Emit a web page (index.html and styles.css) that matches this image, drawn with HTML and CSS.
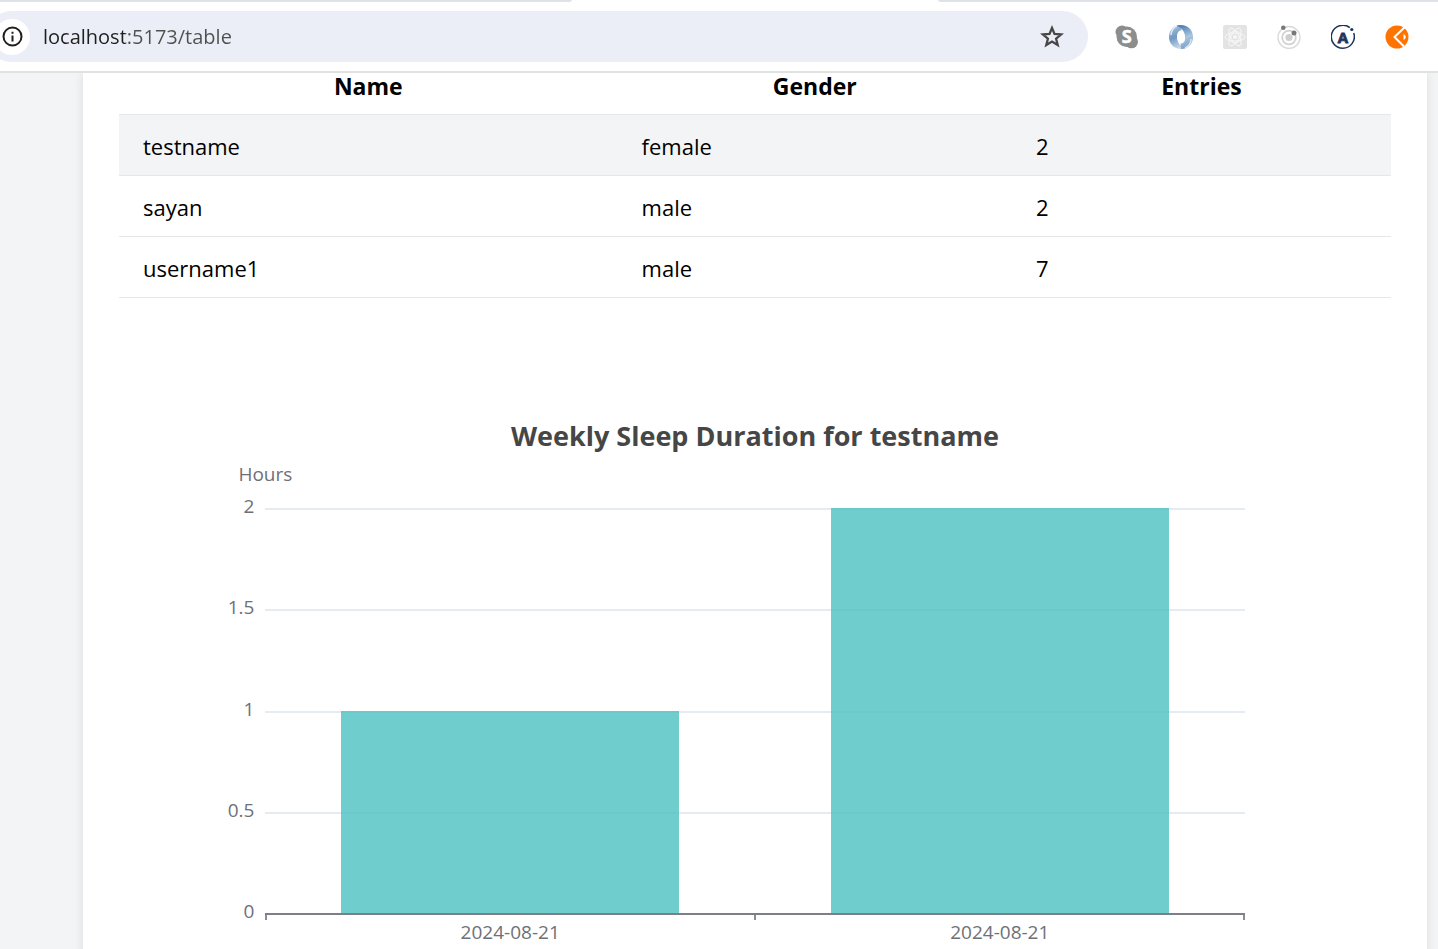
FILE: index.html
```html
<!DOCTYPE html>
<html lang="en">
<head>
<meta charset="utf-8">
<meta name="viewport" content="width=device-width, initial-scale=1">
<title>Sleep entries</title>
<link rel="stylesheet" href="styles.css">
</head>
<body>
<header class="browser">
  <div class="tabs"><span class="tab-strip tab-strip-left"></span><span class="tab-active"></span><span class="tab-strip tab-strip-right"></span></div>
  <div class="toolbar">
    <div class="address">
      <button class="site-info" type="button" aria-label="Site information">
        <svg viewBox="0 0 24 24" width="24" height="24" fill="none" stroke="#1f1f1f" stroke-width="2"><circle cx="12.500" cy="11.500" r="9"/><path d="M12.500 10.500v6M12.500 6.700v2"/></svg>
      </button>
      <input class="url" type="text" aria-label="Address" value="localhost:5173/table" spellcheck="false">
      <button class="icon-button" type="button" aria-label="Bookmark">
        <svg viewBox="0 0 24 24" width="24" height="24" fill="none" stroke="#474747" stroke-width="2.300"><path d="M12 3l2.500 5.900 6.700.5-5.100 4.300 1.600 6.300-5.700-3.500L6.300 20l1.600-6.300-5.100-4.300 6.700-.5z"/></svg>
      </button>
    </div>
    <div class="extensions">
      <button class="icon-button" type="button" aria-label="Skype">
        <svg viewBox="0 0 24 24" width="24" height="24" fill="#8d8d8d"><circle cx="7" cy="7" r="6.500"/><circle cx="16.500" cy="16.800" r="6.500"/><circle cx="11.700" cy="11.700" r="10.200"/><text class="glyph" x="11.700" y="18.200" font-size="18" fill="#fff" stroke="#fff" stroke-width=".6" text-anchor="middle">S</text></svg>
      </button>
      <button class="icon-button" type="button" aria-label="JSON viewer">
        <svg viewBox="0 0 24 24" width="24" height="24">
          <defs>
            <linearGradient id="ring-a" x1=".2" y1="0" x2=".5" y2="1"><stop offset="0" stop-color="#a9c5e0"/><stop offset=".5" stop-color="#7199c3"/><stop offset="1" stop-color="#c9dced"/></linearGradient>
            <linearGradient id="ring-b" x1=".5" y1="0" x2=".8" y2="1"><stop offset="0" stop-color="#5681b0"/><stop offset=".5" stop-color="#aac6e0"/><stop offset="1" stop-color="#6f98c2"/></linearGradient>
          </defs>
          <path d="M12 0C5 0 0 5.300 0 12s5 12 12 12c2 0 4-.5 5-1-5-1-9-5-9-11 0-4 2-6.500 4.500-6.500z" fill="url(#ring-a)"/>
          <path d="M12 24c7 0 12-5.300 12-12S19 0 12 0C10 0 8 .5 7 1c5 1 9 5 9 11 0 4-2 6.500-4.500 6.500z" fill="url(#ring-b)"/>
          <path d="M8 1C4 3 2 6 2 10M16 23c4-2 6-5 6-9" fill="none" stroke="#dce8f3" stroke-width="1.500"/>
          <ellipse cx="12.200" cy="12" rx="3.700" ry="6.300" fill="#fff" transform="rotate(-12 12 12)"/>
        </svg>
      </button>
      <button class="icon-button" type="button" aria-label="React developer tools">
        <svg viewBox="0 0 24 24" width="24" height="24"><rect width="24" height="24" rx="2" fill="#e3e3e3"/><g fill="none" stroke="#fafafa" stroke-width=".8"><ellipse cx="12" cy="12" rx="10" ry="4"/><ellipse cx="12" cy="12" rx="10" ry="4" transform="rotate(60 12 12)"/><ellipse cx="12" cy="12" rx="10" ry="4" transform="rotate(120 12 12)"/><circle cx="12" cy="12" r="6"/></g><circle cx="12" cy="12" r="2" fill="#f7f7f7"/></svg>
      </button>
      <button class="icon-button" type="button" aria-label="Orbit">
        <svg viewBox="0 0 24 24" width="24" height="24"><g fill="none"><circle cx="12" cy="12.500" r="11" stroke="#d9d9d9" stroke-width="1.300"/><circle cx="12" cy="12.500" r="6.800" stroke="#d2d2d2" stroke-width="1.800"/></g><circle cx="12" cy="12.500" r="3.600" fill="#cfcfcf"/><circle cx="6.300" cy="2.800" r="2.300" fill="#777"/><circle cx="17" cy="8" r="2.500" fill="#777"/></svg>
      </button>
      <button class="icon-button" type="button" aria-label="Apollo">
        <svg viewBox="0 0 24 24" width="24" height="24" fill="none" stroke="#1f355c"><path d="M18.800 2.600A11.500 11.500 0 1 0 22.700 8" stroke-width="1.500"/><circle cx="20.800" cy="4.500" r="1.600" fill="#1f355c" stroke="none"/><text class="glyph" x="12" y="17.500" font-size="15" fill="#1f355c" stroke-width=".8" text-anchor="middle">A</text></svg>
      </button>
      <button class="icon-button" type="button" aria-label="Requests">
        <svg viewBox="0 0 24 24" width="24" height="24"><circle cx="12" cy="12" r="11.500" fill="#ff7300"/><path d="M21 1L9.500 12 20 22.500" fill="none" stroke="#fff" stroke-width="2"/><path d="M18.500 9c3 1.500 3 4.500 0 6z" fill="#fff"/></svg>
      </button>
    </div>
  </div>
</header>
<main class="page">
  <section class="card">
    <table class="users">
      <colgroup><col class="col-name"><col class="col-gender"><col class="col-entries"></colgroup>
      <thead><tr><th scope="col">Name</th><th scope="col">Gender</th><th scope="col">Entries</th></tr></thead>
      <tbody>
        <tr class="selected"><td>testname</td><td>female</td><td>2</td></tr>
        <tr><td>sayan</td><td>male</td><td>2</td></tr>
        <tr><td>username1</td><td>male</td><td>7</td></tr>
      </tbody>
    </table>
    <figure class="chart">
      <figcaption class="chart-title">Weekly Sleep Duration for testname</figcaption>
      <div class="axis-name">Hours</div>
      <div class="y-labels"><span>2</span><span>1.5</span><span>1</span><span>0.5</span><span>0</span></div>
      <div class="plot">
        <div class="grid-lines"><i></i><i></i><i></i><i></i></div>
        <div class="bars"><div class="band"><div class="bar" style="height:50%"></div></div><div class="band"><div class="bar" style="height:100%"></div></div></div>
      </div>
      <div class="x-axis"><i></i><i></i><i></i></div>
      <div class="x-labels"><span>2024-08-21</span><span>2024-08-21</span></div>
    </figure>
  </section>
</main>
</body>
</html>
```
FILE: styles.css
```css
* { box-sizing: border-box; }
body {
  margin: 0;
  height: 100vh;
  display: flex;
  flex-direction: column;
  overflow: hidden;
  background: #f3f4f6;
  color: #000;
  font-family: "Segoe UI", "Open Sans", "Noto Sans", sans-serif;
}
button { padding: 0; border: 0; background: none; }

/* Browser bar */
.browser {
  flex: none;
  position: relative;
  background: #fff;
  border-bottom: 2px solid #e0e2e0;
}
.tabs { display: flex; height: 2px; }
.tab-strip { background: #dfe3e8; }
.tab-strip-left { width: 572px; border-bottom-right-radius: 4px 2px; }
.tab-active { width: 366px; }
.tab-strip-right { flex: 1; border-bottom-left-radius: 4px 2px; }
.toolbar {
  display: flex;
  align-items: center;
  gap: 28px;
  padding: 9px 29px 9px 0;
  margin-left: -14px;
}
.address {
  flex: 1;
  display: flex;
  align-items: center;
  height: 51px;
  margin-right: -1px;
  padding: 0 24px 0 8px;
  border-radius: 26px;
  background: #ebeef7;
}
.site-info {
  display: grid;
  place-items: center;
  width: 36px;
  height: 36px;
  border-radius: 50%;
  background: #fff;
}
.url {
  flex: 1;
  min-width: 0;
  margin-left: 13px;
  padding: 0;
  border: 0;
  outline: 0;
  font: 20px/28px "Segoe UI", "Open Sans", "Noto Sans", sans-serif;
  color: transparent;
  background: linear-gradient(90deg, #1f1f1f 82px, #505050 82px);
  -webkit-background-clip: text;
  background-clip: text;
}
.icon-button { display: block; width: 24px; height: 24px; }
.icon-button svg, .site-info svg { display: block; }
.glyph { font-family: "Open Sans", sans-serif; font-weight: 700; }
.extensions { display: flex; gap: 30px; }

/* Page */
.page { flex: 1; min-height: 0; padding: 0 11px 0 83px; }
.card {
  padding: 0 36px 24px;
  background: #fff;
  box-shadow: 0 0 9px rgba(0, 0, 0, .1);
}
.users { width: 100%; border-collapse: collapse; table-layout: fixed; }
.col-name { width: 39.2%; }
.col-gender { width: 31%; }
.col-entries { width: 29.8%; }
.users th { padding: 0 24px 15px; font-size: 23px; line-height: 26px; font-weight: 700; }
.users td { padding: 13px 24px 11px; font-size: 22px; line-height: 36px; }
.users tr { border-bottom: 1px solid #e5e7eb; }
.selected { background: #f3f4f6; }

/* Chart */
.chart {
  display: grid;
  grid-template-columns: 10% 80% 10%;
  margin: 120px 24px 0;
  color: #6e7079;
  font-size: 19px;
  line-height: 24px;
}
.chart-title {
  grid-column: 1 / -1;
  text-align: center;
  font-size: 27px;
  line-height: 36px;
  font-weight: 700;
  color: #464646;
}
.axis-name {
  grid-column: 1;
  justify-self: end;
  width: 54px;
  margin: 8px -27px 22px 0;
  text-align: center;
}
.y-labels {
  grid-column: 1;
  display: flex;
  flex-direction: column;
  justify-content: space-between;
  margin: -14px 0 -10px;
  padding-right: 11px;
  text-align: right;
}
.plot { grid-column: 2; display: grid; height: 405px; }
.grid-lines, .bars { grid-area: 1 / 1; display: grid; min-height: 0; }
.grid-lines { grid-template-rows: repeat(4, 1fr); }
.grid-lines i { border-top: 2px solid #e6eaf2; }
.bars { grid-template-columns: 1fr 1fr; }
.band { display: flex; align-items: flex-end; justify-content: center; }
.bar { width: 69%; background: rgba(75, 192, 192, .8); }
.x-axis {
  grid-column: 2;
  display: flex;
  justify-content: space-between;
  height: 7px;
  border-top: 2px solid #7d7f88;
}
.x-axis i { width: 2px; background: #8b8d95; }
.x-labels { grid-column: 2; display: grid; grid-template-columns: 1fr 1fr; text-align: center; }
```
